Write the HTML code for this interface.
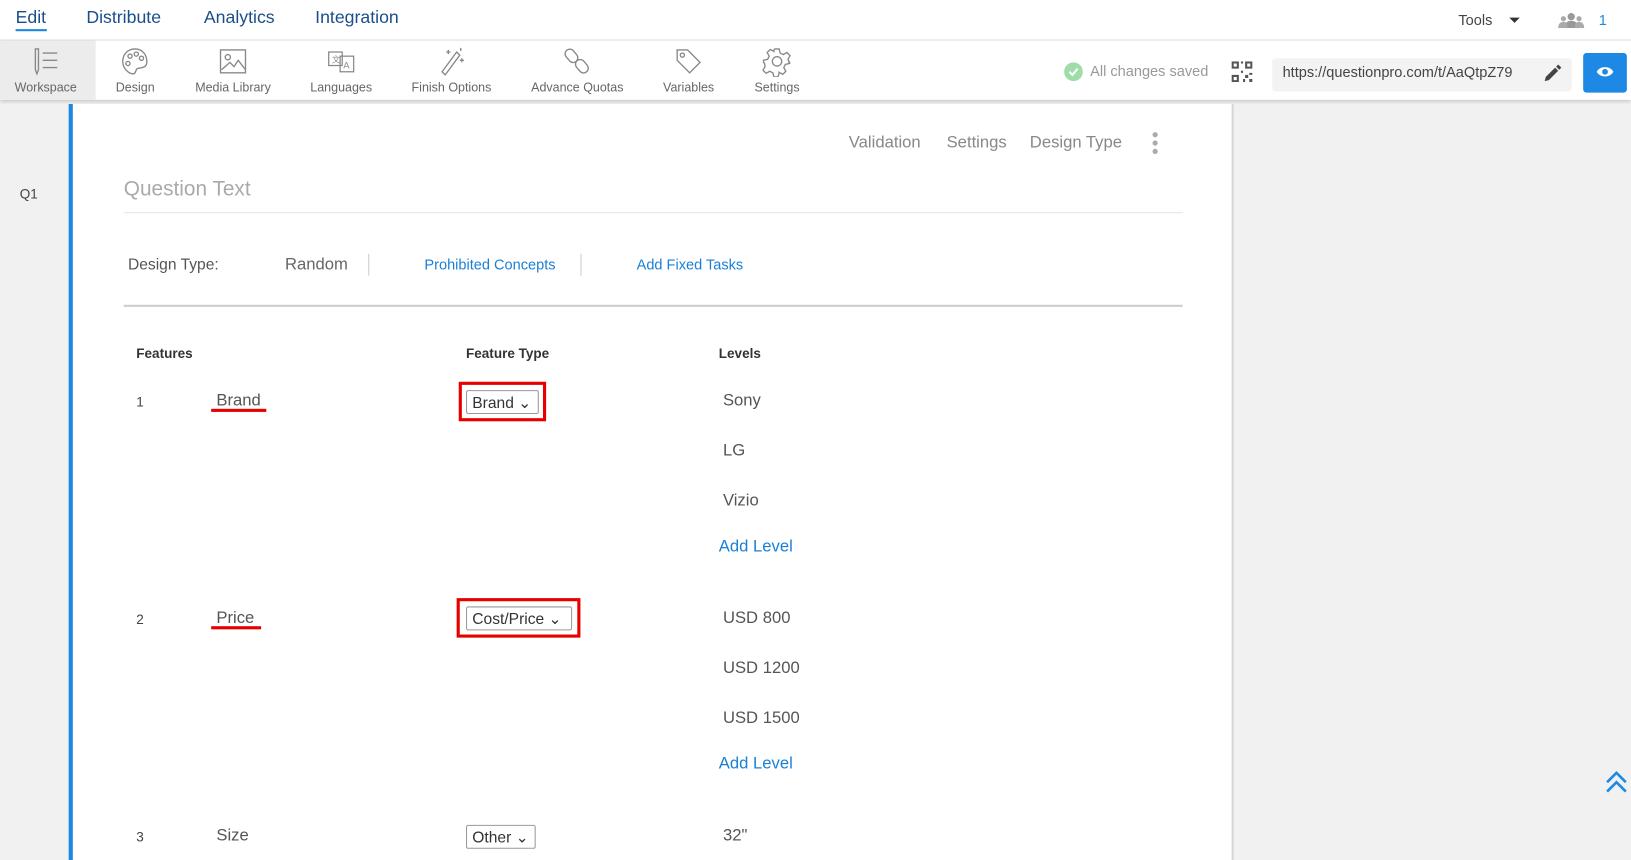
<!DOCTYPE html>
<html><head><meta charset="utf-8"><style>
*{box-sizing:border-box;margin:0;padding:0}
html,body{width:1631px;height:860px;overflow:hidden;background:#f1f1f1;font-family:"Liberation Sans",sans-serif}
#w{position:absolute;left:0;top:0;width:1568px;height:827px;transform:scale(1.0402);transform-origin:0 0;background:#f1f1f1}
.a{position:absolute;white-space:nowrap}
.top{position:absolute;left:0;top:0;width:1568px;height:39px;background:#fff;border-bottom:1px solid #ddd}
.nav{font-size:17px;color:#1b4e8a;top:7px}
.tb{position:absolute;left:0;top:39px;width:1568px;height:57px;background:#fff;box-shadow:0 2px 3px rgba(0,0,0,.15)}
.lbl{font-size:12px;color:#666;top:38px;transform:translateX(-50%)}
.ic{position:absolute;top:5px;transform:translateX(-50%)}
.card{position:absolute;left:66px;top:100px;width:1120px;height:727px;background:#fff;border-left:4px solid #1a87e0;border-right:2px solid #d6d6d6}
.g{color:#888;font-size:16px}
.hd{font-weight:bold;font-size:13px;color:#333}
.t{font-size:16px;color:#555}
.bl{color:#1a7fd6}
.sel{position:absolute;height:23px;border:1px solid #999;border-radius:2px;font-size:15px;color:#333;padding:2px 5px;background:#fff}
.red{position:absolute;border:3px solid #e60000}
.ul{position:absolute;height:3px;background:#e60000}
</style></head><body><div id="w">
<div class="top">
<div class="a nav" style="left:15px">Edit</div>
<div class="a" style="left:15px;top:28px;width:30px;height:2px;background:#1a87e0"></div>
<div class="a nav" style="left:83px">Distribute</div>
<div class="a nav" style="left:196px">Analytics</div>
<div class="a nav" style="left:303px">Integration</div>
<div class="a" style="left:1402px;top:11px;font-size:14px;color:#444">Tools</div>
<div class="a" style="left:1451px;top:17px;border:5px solid transparent;border-top:5px solid #333;border-bottom:0;width:0"></div>
<svg class="a" style="left:1497px;top:12px" width="27" height="15" viewBox="0 0 27 15"><circle cx="13.5" cy="4" r="3.5" fill="#999"/><circle cx="6" cy="6" r="2.5" fill="#aaa"/><circle cx="21" cy="6" r="2.5" fill="#aaa"/><path d="M7 15c0-5 3-7 6.5-7s6.5 2 6.5 7z" fill="#999"/><path d="M1 15c0-4 2-6 5-6s4 2 4 6zM17 15c0-4 1-6 4-6s5 2 5 6z" fill="#aaa"/></svg>
<div class="a" style="left:1537px;top:11px;font-size:14px;color:#1a87e0">1</div>
</div>
<div class="tb">
<div class="a" style="left:0;top:0;width:92px;height:57px;background:#ececec"></div>
<svg class="ic" style="left:44px" width="30" height="30" viewBox="0 0 30 30" fill="none" stroke="#888" stroke-width="1.3"><path d="M5 3h3v20l-1.5 4-1.5-4z"/><path d="M12 7h14M12 14h14M12 21h14"/></svg>
<svg class="ic" style="left:130px" width="30" height="30" viewBox="0 0 30 30" fill="none" stroke="#888" stroke-width="1.3"><path d="M15 3C7 3 3 9 3 15c0 7 6 12 10 12 3 0 2-4 4-5s8 0 9-5C27 8 21 3 15 3z"/><circle cx="10" cy="10" r="2"/><circle cx="16" cy="8" r="2"/><circle cx="21" cy="12" r="2"/><circle cx="8" cy="17" r="2"/></svg>
<svg class="ic" style="left:224px" width="30" height="30" viewBox="0 0 30 30" fill="none" stroke="#888" stroke-width="1.3"><rect x="3" y="4" width="24" height="22"/><circle cx="10" cy="11" r="2.5"/><path d="M4 23l8-7 4 4 4-6 7 9"/></svg>
<svg class="ic" style="left:328px" width="30" height="30" viewBox="0 0 30 30" fill="none" stroke="#888" stroke-width="1.2"><rect x="3" y="6" width="13" height="13"/><rect x="14" y="10" width="13" height="15"/><text x="6" y="16" font-size="8" fill="#888" stroke="none">文</text><text x="17" y="22" font-size="9" fill="#888" stroke="none">A</text></svg>
<svg class="ic" style="left:434px" width="30" height="30" viewBox="0 0 30 30" fill="none" stroke="#888" stroke-width="1.3"><path d="M20 6l3 3L9 28l-3-3z"/><path d="M12 4v4M10 6h4M25 12v4M23 14h4M24 2v3"/></svg>
<svg class="ic" style="left:555px" width="30" height="30" viewBox="0 0 30 30" fill="none" stroke="#888" stroke-width="1.3"><rect x="5" y="3" width="9" height="14" rx="4.5" transform="rotate(-40 9 10)"/><rect x="15" y="13" width="9" height="14" rx="4.5" transform="rotate(-40 19 20)"/></svg>
<svg class="ic" style="left:662px" width="30" height="30" viewBox="0 0 30 30" fill="none" stroke="#888" stroke-width="1.3"><path d="M4 4h10l12 12-10 10L4 14z"/><circle cx="9" cy="9" r="2"/></svg>
<svg class="ic" style="left:747px" width="30" height="30" viewBox="0 0 30 30" fill="none" stroke="#888" stroke-width="1.3"><path d="M13 3h4l1 4 3 1.5 3.5-2 3 3-2 3.5L27 16l-.5 0 .5 1-4 1-1.5 3 2 3.5-3 3-3.5-2L17 26l-1 4h-4l-1-4-3-1.5-3.5 2-3-3 2-3.5L3 17l-1-1v-2l4-1 1.5-3-2-3.5 3-3 3.5 2L12 4z"/><circle cx="15" cy="15" r="4.5"/></svg>
<div class="a lbl" style="left:44px">Workspace</div>
<div class="a lbl" style="left:130px">Design</div>
<div class="a lbl" style="left:224px">Media Library</div>
<div class="a lbl" style="left:328px">Languages</div>
<div class="a lbl" style="left:434px">Finish Options</div>
<div class="a lbl" style="left:555px">Advance Quotas</div>
<div class="a lbl" style="left:662px">Variables</div>
<div class="a lbl" style="left:747px">Settings</div>
<svg class="a" style="left:1023px;top:21px" width="18" height="18" viewBox="0 0 18 18"><circle cx="9" cy="9" r="9" fill="#9fdca7"/><path d="M5 9l3 3 5-6" stroke="#fff" stroke-width="2" fill="none"/></svg>
<div class="a" style="left:1048px;top:21px;font-size:14px;color:#999">All changes saved</div>
<svg class="a" style="left:1184px;top:20px" width="20" height="20" viewBox="0 0 20 20" fill="#555"><path d="M0 0h7v7H0zM2 2v3h3V2zM13 0h7v7h-7zM15 2v3h3V2zM0 13h7v7H0zM2 15v3h3v-3zM9 0h2v2H9zM9 9h2v2H9zM13 13h3v3h-3zM17 17h3v3h-3zM17 11h3v2h-3zM11 17h2v3h-2z"/></svg>
<div class="a" style="left:1223px;top:17px;width:288px;height:32px;background:#f3f3f3;border-radius:3px"></div>
<div class="a" style="left:1233px;top:22px;font-size:14px;color:#444;width:236px;overflow:hidden">https://questionpro.com/t/AaQtpZ79</div>
<svg class="a" style="left:1482px;top:22px" width="20" height="20" viewBox="0 0 20 20"><path d="M3 17l1-4 9-9 3 3-9 9zM14 3l2-2 3 3-2 2z" fill="#444"/></svg>
<div class="a" style="left:1522px;top:12px;width:42px;height:38px;background:#1e88e5;border-radius:3px"></div>
<svg class="a" style="left:1534px;top:23px" width="18" height="14" viewBox="0 0 18 14"><path d="M1 7c3-6 13-6 16 0-3 6-13 6-16 0z" fill="#fff"/><circle cx="9" cy="7" r="2.8" fill="#1e88e5"/></svg>
</div>
<div class="a" style="left:19px;top:179px;font-size:13px;color:#444">Q1</div>
<div class="card">
<div class="a g" style="left:746px;top:29px">Validation</div>
<div class="a g" style="left:840px;top:29px">Settings</div>
<div class="a g" style="left:920px;top:29px">Design Type</div>
<div class="a" style="left:1038px;top:27px;width:5px;height:5px;border-radius:50%;background:#aaa;box-shadow:0 8px 0 #aaa,0 16px 0 #aaa"></div>
<div class="a" style="left:49px;top:71px;font-size:20px;color:#aaa">Question Text</div>
<div class="a" style="left:49px;top:104px;width:1018px;height:1px;background:#e5e5e5"></div>
<div class="a" style="left:53px;top:146px;font-size:15px;color:#555">Design Type:</div>
<div class="a" style="left:204px;top:146px;font-size:16px;color:#666">Random</div>
<div class="a" style="left:284px;top:144px;width:1px;height:21px;background:#ccc"></div>
<div class="a bl" style="left:338px;top:146px;font-size:14px">Prohibited Concepts</div>
<div class="a" style="left:488px;top:144px;width:1px;height:21px;background:#ccc"></div>
<div class="a bl" style="left:542px;top:146px;font-size:14px">Add Fixed Tasks</div>
<div class="a" style="left:49px;top:193px;width:1018px;height:2px;background:#ccc"></div>
<div class="a hd" style="left:61px;top:232px">Features</div>
<div class="a hd" style="left:378px;top:232px">Feature Type</div>
<div class="a hd" style="left:621px;top:232px">Levels</div>

<div class="a" style="left:61px;top:279px;font-size:13px;color:#444">1</div>
<div class="a t" style="left:138px;top:277px">Brand</div>
<div class="ul" style="left:133px;top:293px;width:53px"></div>
<div class="red" style="left:371px;top:267px;width:84px;height:38px"></div>
<div class="sel" style="left:378px;top:275px;width:70px">Brand ⌄</div>
<div class="a t" style="left:625px;top:277px">Sony</div>
<div class="a t" style="left:625px;top:325px">LG</div>
<div class="a t" style="left:625px;top:373px">Vizio</div>
<div class="a bl" style="left:621px;top:417px;font-size:16px">Add Level</div>

<div class="a" style="left:61px;top:488px;font-size:13px;color:#444">2</div>
<div class="a t" style="left:138px;top:486px">Price</div>
<div class="ul" style="left:133px;top:502px;width:48px"></div>
<div class="red" style="left:369px;top:475px;width:119px;height:38px"></div>
<div class="sel" style="left:378px;top:483px;width:102px">Cost/Price ⌄</div>
<div class="a t" style="left:625px;top:486px">USD 800</div>
<div class="a t" style="left:625px;top:534px">USD 1200</div>
<div class="a t" style="left:625px;top:582px">USD 1500</div>
<div class="a bl" style="left:621px;top:626px;font-size:16px">Add Level</div>

<div class="a" style="left:61px;top:697px;font-size:13px;color:#444">3</div>
<div class="a t" style="left:138px;top:695px">Size</div>
<div class="sel" style="left:378px;top:693px;width:67px">Other ⌄</div>
<div class="a t" style="left:625px;top:695px">32"</div>
</div>
<svg class="a" style="left:1543px;top:740px" width="22" height="24" viewBox="0 0 22 24" fill="none" stroke="#1e88e5" stroke-width="2.5"><path d="M2 12l9-9 9 9M2 21l9-9 9 9"/></svg>
</div></body></html>
